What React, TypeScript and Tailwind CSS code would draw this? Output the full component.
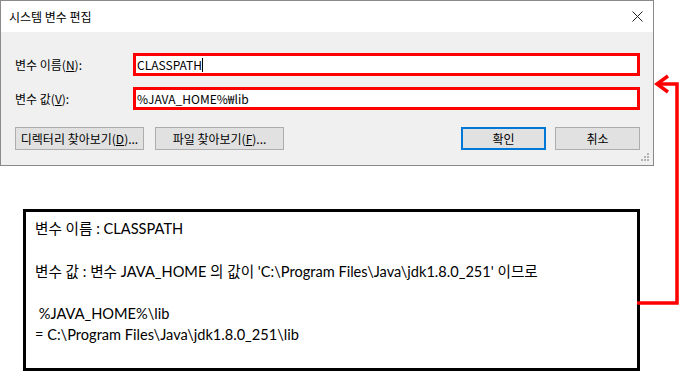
export default function App() {
  const ko = { fontFamily: '"Noto Sans CJK KR", "Noto Sans", sans-serif' };
  return (
    <div className="relative w-[681px] h-[373px] bg-white overflow-hidden" style={ko}>
      {/* dialog */}
      <div className="w-[654px] h-[166px] border border-[#8a8a8a] flex flex-col">
        <div className="h-[31px] bg-white flex items-center justify-between pl-[8px] pr-[9px]">
          <span className="text-[12px] text-black">시스템 변수 편집</span>
          <svg width="11" height="11" viewBox="0 0 11 11" className="mr-[1px]">
            <path d="M0.5 0.5 L10.5 10.5 M10.5 0.5 L0.5 10.5" stroke="#222" strokeWidth="1" />
          </svg>
        </div>
        <div className="relative flex-1 bg-[#f0f0f0] pt-[21px] pl-[14px] pr-[13px]">
          <div className="flex items-center h-[23px]">
            <span className="w-[118px] text-[12px] text-black">
              변수 이름(<span className="underline">N</span>):
            </span>
            <div className="flex-1 h-[23px] border-[3px] border-[#ff0000] bg-white flex items-center pl-[1px] text-[12px] text-black">
              CLASSPATH<span className="w-px h-[14px] bg-black" />
            </div>
          </div>
          <div className="flex items-center h-[23px] mt-[11px]">
            <span className="w-[118px] text-[12px] text-black">
              변수 값(<span className="underline">V</span>):
            </span>
            <div className="flex-1 h-[23px] border-[3px] border-[#ff0000] bg-white flex items-center pl-[1px] text-[12px] text-black">
              %JAVA_HOME%₩lib
            </div>
          </div>
          <div className="flex items-center mt-[17px] h-[23px]">
            <button className="w-[129px] h-[23px] bg-[#e1e1e1] border border-[#adadad] text-[12px] text-black">
              디렉터리 찾아보기(<span className="underline">D</span>)...
            </button>
            <button className="ml-[11px] w-[129px] h-[23px] bg-[#e1e1e1] border border-[#adadad] text-[12px] text-black">
              파일 찾아보기(<span className="underline">F</span>)...
            </button>
            <div className="flex-1" />
            <button className="w-[85px] h-[23px] bg-[#e1e1e1] border-2 border-[#0078d7] text-[12px] text-black">
              확인
            </button>
            <button className="ml-[9px] w-[85px] h-[23px] bg-[#e1e1e1] border border-[#adadad] text-[12px] text-black">
              취소
            </button>
          </div>
          <svg width="9" height="9" viewBox="0 0 9 9" className="absolute right-[3px] bottom-[3px]">
            <rect x="6" y="0" width="2" height="2" fill="#b5b5b5" />
            <rect x="3" y="3" width="2" height="2" fill="#b5b5b5" />
            <rect x="6" y="3" width="2" height="2" fill="#b5b5b5" />
            <rect x="0" y="6" width="2" height="2" fill="#b5b5b5" />
            <rect x="3" y="6" width="2" height="2" fill="#b5b5b5" />
            <rect x="6" y="6" width="2" height="2" fill="#b5b5b5" />
          </svg>
        </div>
      </div>

      {/* note box */}
      <div
        className="ml-[23px] mt-[43px] w-[617px] h-[162px] border-[3px] border-black bg-white pl-[9px] pt-[6px] text-[14.6px] leading-[21px] text-black"
        style={{ fontFamily: 'Lato, "Noto Sans CJK KR", sans-serif' }}
      >
        <div>변수 이름 : CLASSPATH</div>
        <div className="h-[22px]" />
        <div>변수 값 : 변수 JAVA_HOME 의 값이 'C:\Program Files\Java\jdk1.8.0_251' 이므로</div>
        <div className="h-[21px]" />
        <div>&nbsp;%JAVA_HOME%\lib</div>
        <div>= C:\Program Files\Java\jdk1.8.0_251\lib</div>
      </div>

      {/* red arrow annotation */}
      <svg width="681" height="373" className="absolute left-0 top-0 pointer-events-none">
        <path d="M637 303 L677 303 L677 84 L657 84" fill="none" stroke="#ff0000" strokeWidth="3.5" />
        <path d="M668 76 L657 84 L668 92" fill="none" stroke="#ff0000" strokeWidth="3.5" />
      </svg>
    </div>
  );
}
